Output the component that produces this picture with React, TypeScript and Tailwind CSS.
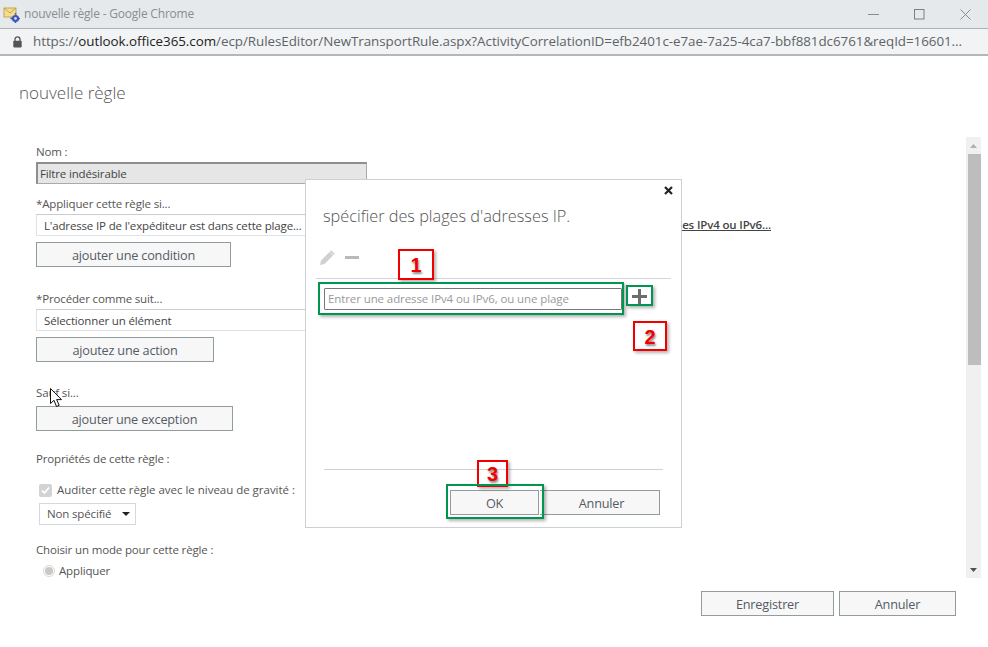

import React from "react";

const font = { fontFamily: '"Open Sans", "Noto Sans", sans-serif' };

function Btn({ w, children, className = "" }: { w: string; children: React.ReactNode; className?: string }) {
  return (
    <div className={`${w} h-[25px] shrink-0 border border-[#929c9c] bg-[#f7f7f7] flex items-center justify-center pt-[2px] text-[12.7px] tracking-[-0.2px] text-[#555b66] ${className}`}>
      {children}
    </div>
  );
}

function Label({ children, className = "" }: { children: React.ReactNode; className?: string }) {
  return <div className={`h-4 leading-4 text-[11.5px] tracking-[-0.15px] text-[#555] ${className}`}>{children}</div>;
}

function Field({ children }: { children: React.ReactNode }) {
  return (
    <div className="h-[22px] flex-1 border border-[#dde3ea] border-t-[#c9ccd0] bg-white pl-[7px] pt-[1px] flex items-center text-[11.5px] tracking-[-0.15px] text-[#444] whitespace-nowrap overflow-hidden">
      {children}
    </div>
  );
}

function RedBox({ n, className }: { n: string; className: string }) {
  return (
    <div className={`absolute border-[2px] border-[#f20000] shadow-[2px_2px_3px_rgba(0,0,0,0.3)] bg-transparent flex items-center justify-center pt-[1px] text-[20px] font-bold text-[#f20000] [text-shadow:1px_2px_2px_rgba(0,0,0,0.45)] ${className}`} style={{ fontFamily: '"Liberation Sans", sans-serif' }}>
      {n}
    </div>
  );
}

function GreenBox({ className }: { className: string }) {
  return <div className={`absolute border-[2px] border-[#00964f] shadow-[2px_2px_3px_rgba(0,0,0,0.3)] ${className}`} />;
}

export default function App() {
  return (
    <div className="relative w-[988px] h-[647px] bg-white overflow-hidden flex flex-col" style={font}>
      {/* title bar */}
      <div className="h-[29px] shrink-0 bg-[#e6e9ec] border-b border-[#aeb0b2] flex items-center pl-[3px]">
        <svg width="17" height="17" viewBox="0 0 17 17" className="shrink-0">
          <rect x="1" y="2" width="12" height="9" fill="#f6dc8e" stroke="#b8963c" strokeWidth="0.8" />
          <path d="M1 2 L7 7 L13 2" fill="none" stroke="#b8963c" strokeWidth="0.8" />
          <circle cx="12.5" cy="12.5" r="3.6" fill="#3b55b8" />
          <circle cx="12.5" cy="12.5" r="1.4" fill="#cfd8f5" />
          <circle cx="12.5" cy="7.8" r="0.9" fill="#3b55b8" />
          <circle cx="12.5" cy="16.6" r="0.8" fill="#3b55b8" />
          <circle cx="8.2" cy="12.5" r="0.9" fill="#3b55b8" />
          <circle cx="16.4" cy="12.5" r="0.8" fill="#3b55b8" />
        </svg>
        <span className="ml-[4px] text-[12px] text-[#8b8d90] tracking-[-0.2px] whitespace-nowrap">nouvelle règle - Google Chrome</span>
        <div className="ml-auto flex items-center">
          <div className="w-[46px] flex justify-center"><svg width="11" height="11" viewBox="0 0 11 11"><path d="M0 5.5H11" stroke="#8a8c8e" /></svg></div>
          <div className="w-[46px] flex justify-center"><svg width="11" height="11" viewBox="0 0 11 11"><rect x="0.5" y="0.5" width="9.5" height="9.5" fill="none" stroke="#7c7e80" /></svg></div>
          <div className="w-[46px] flex justify-center"><svg width="11" height="11" viewBox="0 0 11 11"><path d="M0.5 0.5L10.5 10.5M10.5 0.5L0.5 10.5" stroke="#8a8c8e" /></svg></div>
        </div>
      </div>
      {/* address bar */}
      <div className="h-[27px] shrink-0 bg-[#f1f3f4] border-b-[2px] border-[#b4b6b8] flex items-center pl-[13px] whitespace-nowrap overflow-hidden">
        <svg width="9" height="12" viewBox="0 0 9 12" className="shrink-0">
          <path d="M2 5V3.3a2.5 2.5 0 0 1 5 0V5" fill="none" stroke="#555" strokeWidth="1.3" />
          <rect x="0.3" y="4.8" width="8.4" height="6.6" rx="0.8" fill="#555" />
        </svg>
        <span className="ml-[11px] text-[13.4px] tracking-[-0.05px] text-[#5f6368]">
          https://<span className="text-[#222]">outlook.office365.com</span>/ecp/RulesEditor/NewTransportRule.aspx?ActivityCorrelationID=efb2401c-e7ae-7a25-4ca7-bbf881dc6761&amp;reqId=16601...
        </span>
      </div>

      {/* page */}
      <div className="h-[81px] shrink-0 pl-[19px] pt-[25px] text-[17px] leading-[24px] font-light text-[#555]">nouvelle règle</div>

      <div className="h-[441px] shrink-0 flex">
        <div className="w-[966px] overflow-hidden pl-[36px] pt-[7px]">
          <Label>Nom :</Label>
          <div className="mt-[2px] w-[331px] h-[22px] bg-[#e6e6e6] border border-[#aaa] border-t-[2px] border-l-[2px] border-t-[#8e8e8e] border-l-[#8e8e8e] pl-[2px] flex items-center text-[11.5px] tracking-[-0.15px] text-[#444]">Filtre indésirable</div>

          <Label className="mt-[12px]">*Appliquer cette règle si...</Label>
          <div className="mt-[2px] w-[735px] flex items-center">
            <Field>L'adresse IP de l'expéditeur est dans cette plage...</Field>
            <span className="ml-[8px] text-[11.5px] tracking-[-0.15px] font-semibold text-[#444] underline whitespace-nowrap">Entrer des adresses IPv4 ou IPv6...</span>
          </div>
          <Btn w="w-[195px]" className="mt-[6px]">ajouter une condition</Btn>

          <Label className="mt-[24px] tracking-[-0.2px]">*Procéder comme suit...</Label>
          <div className="mt-[2px] w-[560px] flex"><Field>Sélectionner un élément</Field></div>
          <Btn w="w-[178px]" className="mt-[6px]">ajoutez une action</Btn>

          <Label className="mt-[23px]">Sauf si...</Label>
          <Btn w="w-[197px]" className="mt-[5px]">ajouter une exception</Btn>

          <Label className="mt-[20px] tracking-[-0.04px]">Propriétés de cette règle :</Label>
          <div className="mt-[15px] h-4 flex items-center pl-[3px] text-[11.5px] tracking-[-0.02px] text-[#555]">
            <div className="w-[13px] h-[13px] rounded-[2px] bg-[#d3d3d3] flex items-center justify-center">
              <svg width="11" height="11" viewBox="0 0 11 11"><path d="M2 5.5L4.5 8L9 2.5" fill="none" stroke="#fff" strokeWidth="1.8" /></svg>
            </div>
            <span className="ml-[5px]">Auditer cette règle avec le niveau de gravité :</span>
          </div>
          <div className="mt-[5px] ml-[3px] w-[97px] h-[22px] border border-[#d5d8dc] bg-white pl-[7px] flex items-center text-[11.5px] tracking-[-0.15px] text-[#555]">
            Non spécifié
            <svg width="8" height="4" viewBox="0 0 8 4" className="ml-auto mr-[5px]"><path d="M0 0H8L4 4Z" fill="#222" /></svg>
          </div>
          <Label className="mt-[17px] tracking-[-0.06px]">Choisir un mode pour cette règle :</Label>
          <div className="mt-[5px] h-4 flex items-center pl-[7px] text-[11.5px] tracking-[-0.15px] text-[#555]">
            <div className="w-[12px] h-[12px] rounded-full border border-[#d8d8d8] bg-white flex items-center justify-center">
              <div className="w-[8px] h-[8px] rounded-full bg-[#c8c8c8]" />
            </div>
            <span className="ml-[4px]">Appliquer</span>
          </div>
        </div>
        {/* scrollbar */}
        <div className="w-[15px] bg-[#f0f0f0] flex flex-col items-center">
          <div className="h-[17px] shrink-0 flex items-center justify-center">
            <svg width="7" height="4" viewBox="0 0 7 4"><path d="M0 4H7L3.5 0Z" fill="#b0b0b0" /></svg>
          </div>
          <div className="w-[13px] ml-[1px] h-[211px] shrink-0 bg-[#bdbdbd]" />
          <div className="mt-auto h-[17px] shrink-0 flex items-center justify-center">
            <svg width="7" height="4" viewBox="0 0 7 4"><path d="M0 0H7L3.5 4Z" fill="#505050" /></svg>
          </div>
        </div>
      </div>

      <div className="flex gap-[5px] pl-[701px] pt-[13px]">
        <Btn w="w-[133px]">Enregistrer</Btn>
        <Btn w="w-[117px]">Annuler</Btn>
      </div>

      {/* dialog */}
      <div className="absolute left-[305px] top-[179px] w-[377px] h-[349px] bg-white border border-[#cdd0d2] flex flex-col">
        <div className="absolute right-[8px] top-[6px] text-[#222]">
          <svg width="9" height="9" viewBox="0 0 9 9"><path d="M1 1L8 8M8 1L1 8" stroke="#222" strokeWidth="2.2" /></svg>
        </div>
        <div className="mt-[24px] ml-[17px] h-[24px] leading-[24px] text-[16.3px] font-light text-[#555] whitespace-nowrap">spécifier des plages d'adresses IP.</div>
        <div className="mt-[21px] ml-[13px] h-[17px] flex items-center">
          <svg width="16" height="16" viewBox="0 0 16 16">
            <path d="M1 15L2 10.5L10.5 2L14 5.5L5.5 14Z" fill="#d0d0d0" />
            <path d="M11.5 1L15 4.5" stroke="#d0d0d0" strokeWidth="2" />
          </svg>
          <div className="ml-[10px] w-[14px] h-[3px] bg-[#b9b9b9]" />
        </div>
        <div className="mt-[12px] mx-[10px] h-px bg-[#d4d6d8]" />
        <div className="mt-[9px] ml-[18px] flex items-start">
          <div className="w-[298px] h-[22px] border border-[#777] rounded-[1px] pl-[3px] flex items-center text-[11.5px] tracking-[-0.1px] text-[#9a9a9a] whitespace-nowrap">Entrer une adresse IPv4 ou IPv6, ou une plage</div>
          <svg width="15" height="15" viewBox="0 0 15 15" className="ml-[10px] mt-[1px]"><path d="M7.5 0V15M0 7.5H15" stroke="#6d6d6d" strokeWidth="3" /></svg>
        </div>
        <div className="mt-auto mx-[18px] h-px bg-[#cfd1d3]" />
        <div className="mt-[20px] mb-[12px] mr-[21px] flex justify-end gap-[1px]">
          <Btn w="w-[89px]">OK</Btn>
          <Btn w="w-[120px]" className="border-l-0 pl-[4px]">Annuler</Btn>
        </div>
      </div>

      {/* annotations */}
      <RedBox n="1" className="left-[398px] top-[249px] w-[36px] h-[31px]" />
      <RedBox n="2" className="left-[633px] top-[321px] w-[34px] h-[30px]" />
      <RedBox n="3" className="left-[477px] top-[460px] w-[31px] h-[27px]" />
      <GreenBox className="left-[318px] top-[282px] w-[306px] h-[33px]" />
      <GreenBox className="left-[626px] top-[285px] w-[27px] h-[21px]" />
      <GreenBox className="left-[446px] top-[484px] w-[98px] h-[35px]" />

      {/* cursor */}
      <svg width="14" height="20" viewBox="0 0 14 20" className="absolute left-[50px] top-[388px]">
        <path d="M0.5 0.5V15.5L4 12.3L6.5 18.5L9.2 17.3L6.6 11.6H11.5Z" fill="#fff" stroke="#111" strokeWidth="1" />
      </svg>
    </div>
  );
}
